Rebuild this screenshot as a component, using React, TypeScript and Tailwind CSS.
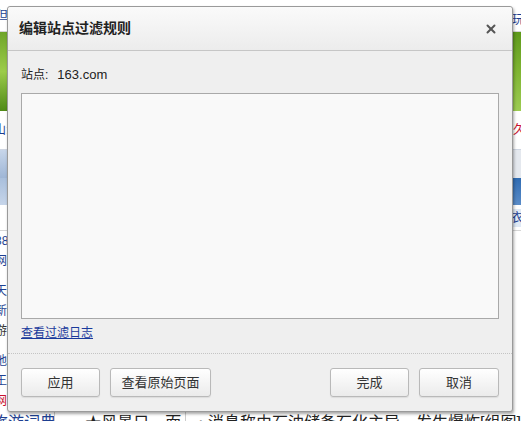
import { X } from 'lucide-react';

const font = { fontFamily: '"Liberation Sans", "Noto Sans CJK SC", sans-serif' };

function BackgroundPage() {
    return (
        <div className="flex flex-col w-[521px] text-[12px] text-[#1d3f91]" style={font}>
            <div className="h-[32px] flex justify-between items-center bg-white border-b border-[#d6d6d6]">
                <span className="-ml-[4px]">但</span>
                <span className="mr-[-3px] pt-[8px]">玩</span>
            </div>
            <div className="h-[79px] flex justify-between">
                <div className="w-[20px] bg-gradient-to-b from-[#6fa52a] via-[#9ccc4a] to-[#4f8a16]" />
                <div className="w-[20px] bg-gradient-to-b from-[#5e9a1b] via-[#7fb532] to-[#9dcc52]" />
            </div>
            <div className="h-[39px] flex justify-between items-center bg-white border-b border-[#cfd6e2]">
                <span className="-ml-[6px] text-[#1d3f91]">山:</span>
                <span className="mr-[-4px] text-[#c8102e]">久</span>
            </div>
            <div className="h-[28px] flex justify-between">
                <div className="w-[20px] bg-gradient-to-b from-[#c7d6ea] to-[#9fb6d6]" />
                <div className="w-[20px] bg-[#e4e8ee]" />
            </div>
            <div className="h-[27px] flex justify-between">
                <div className="w-[20px] bg-gradient-to-b from-[#a9bfdc] to-[#c6d5ea]" />
                <div className="w-[20px] bg-gradient-to-b from-[#2f6cb3] to-[#5a8cc8]" />
            </div>
            <div className="h-[26px] flex justify-between items-center bg-white border-b border-[#d6d6d6]">
                <span />
                <span className="mr-[-6px] bg-[#dfe9f5] px-1">衣</span>
            </div>
            <div className="flex flex-col bg-white leading-[20px] text-[#1d3f91]">
                <span className="-ml-[5px]">38</span>
                <span className="-ml-[5px]">网</span>
                <span className="-ml-[5px] mt-[10px]">天</span>
                <span className="-ml-[5px]">新</span>
                <span className="-ml-[5px] text-[#333]">游</span>
                <span className="-ml-[5px] mt-[10px]">地</span>
                <span className="-ml-[5px]">王</span>
                <span className="-ml-[5px] text-[#c8102e]">网</span>
            </div>
        </div>
    );
}

function BottomStrip() {
    return (
        <div className="absolute left-0 top-[412px] w-[521px] h-[20px] flex items-start text-[16px] leading-[22px] bg-white" style={font}>
            <span className="w-[71px] -ml-[8px] text-[#1d3f91] border-r border-[#cccccc] h-full whitespace-nowrap overflow-hidden">旅游词典</span>
            <span className="ml-[30px] w-[113px] text-[#222] border-r border-[#cccccc] h-full whitespace-nowrap">★风景只一面</span>
            <span className="ml-[12px] text-[#222] whitespace-nowrap">• 消息称由石油储备石化主导，发生爆炸[组图]</span>
        </div>
    );
}

function DialogButton({ label, width }: { label: string; width: string }) {
    return (
        <button
            className={`${width} h-[29px] rounded-[3px] border border-[#b9b9b9] bg-gradient-to-b from-[#ffffff] to-[#ebebeb] text-[13px] text-[#333] shadow-[0_1px_1px_rgba(0,0,0,0.08)]`}>
            {label}
        </button>
    );
}

export default function App() {
    return (
        <div className="relative w-[521px] h-[421px] overflow-hidden bg-white">
            <BackgroundPage />
            <BottomStrip />

            {/* Dialog */}
            <div
                className="absolute left-[7px] top-[6px] w-[506px] h-[406px] flex flex-col bg-[#efefef] border border-[#9a9a9a] rounded-[3px] shadow-[1px_2px_3px_rgba(0,0,0,0.35)]"
                style={font}>
                <div className="h-[44px] flex items-center justify-between px-[11px] bg-gradient-to-b from-[#fafafa] to-[#ececec] border-b border-[#c6c6c6] rounded-t-[3px]">
                    <span className="text-[14px] font-bold text-[#222]">编辑站点过滤规则</span>
                    <X className="w-[14px] h-[14px] text-[#555] mr-[3px]" strokeWidth={3.4} />
                </div>

                <div className="flex flex-col px-[13px]">
                    <div className="mt-[16px] h-[16px] flex items-center text-[12px] text-[#222]">
                        <span>站点:</span>
                        <span className="ml-[9px] text-[13px]">163.com</span>
                    </div>
                    <textarea className="mt-[10px] h-[226px] w-full resize-none bg-[#f9f9f9] border border-[#a9a9a9] outline-none" />
                    <a href="#" className="mt-[6px] h-[16px] text-[12px] leading-[16px] text-[#1a3a9c] underline self-start">
                        查看过滤日志
                    </a>
                </div>

                <div className="mt-[12px] border-t border-dotted border-[#c4c4c4]" />

                <div className="mt-[14px] flex px-[13px]">
                    <div className="flex gap-[10px]">
                        <DialogButton label="应用" width="w-[79px]" />
                        <DialogButton label="查看原始页面" width="w-[101px]" />
                    </div>
                    <div className="flex gap-[10px] ml-auto">
                        <DialogButton label="完成" width="w-[79px]" />
                        <DialogButton label="取消" width="w-[80px]" />
                    </div>
                </div>
            </div>
        </div>
    );
}
